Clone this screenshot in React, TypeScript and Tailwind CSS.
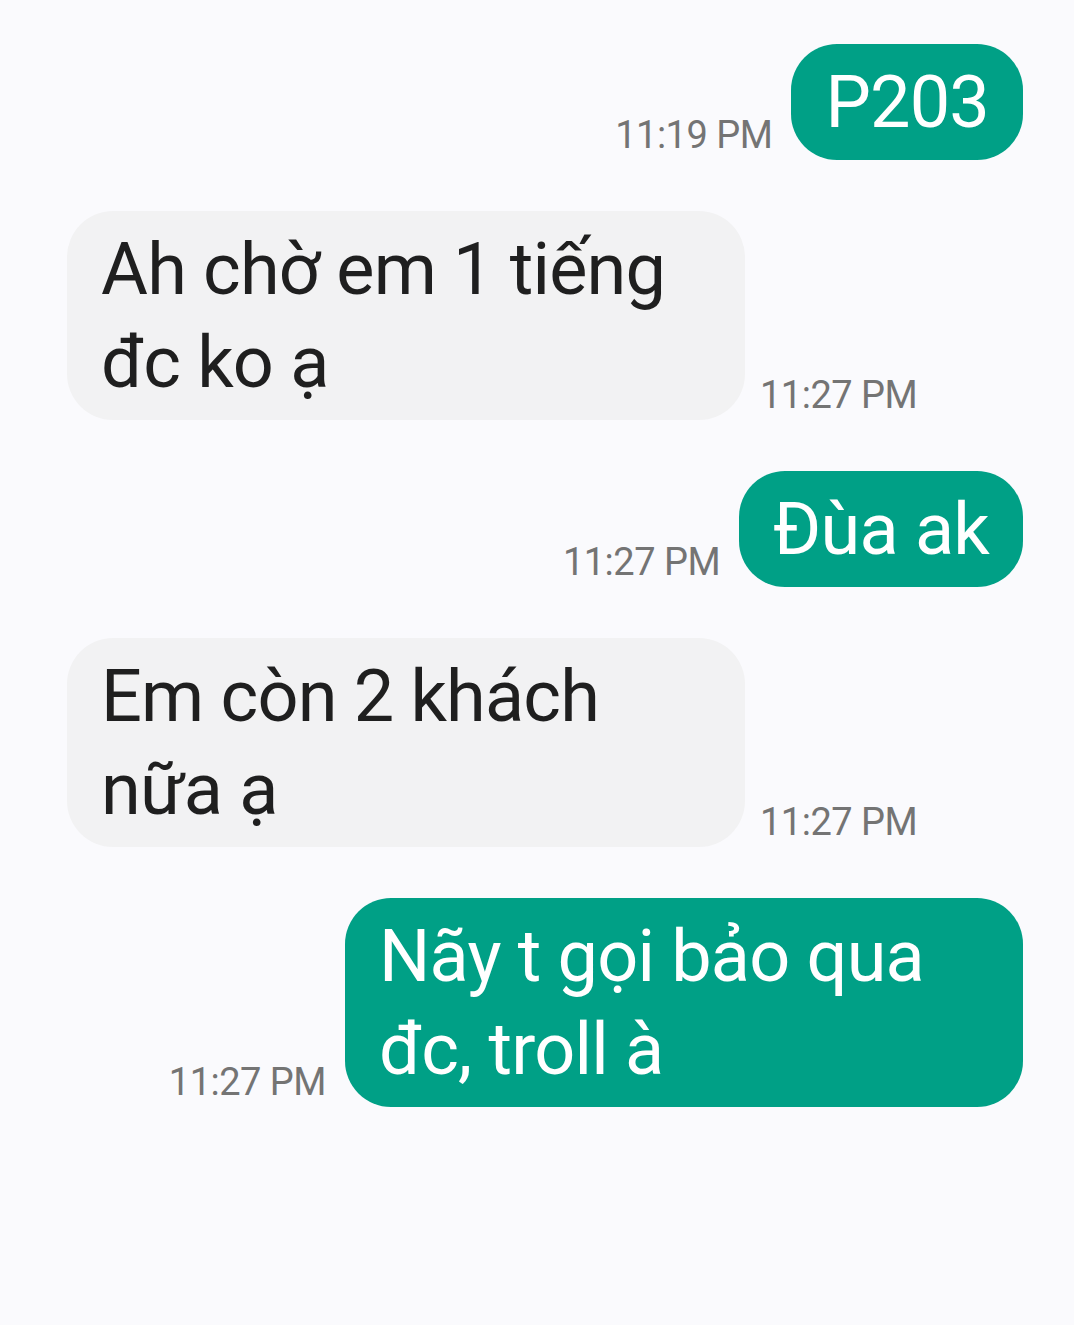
const messages: { text: string; time: string; mine: boolean }[] = [
  { text: "P203", time: "11:19 PM", mine: true },
  { text: "Ah chờ em 1 tiếng đc ko ạ", time: "11:27 PM", mine: false },
  { text: "Đùa ak", time: "11:27 PM", mine: true },
  { text: "Em còn 2 khách nữa ạ", time: "11:27 PM", mine: false },
  { text: "Nãy t gọi bảo qua đc, troll à", time: "11:27 PM", mine: true },
];

function Time({ value }: { value: string }) {
  return (
    <span className="mb-[6px] shrink-0 whitespace-nowrap text-[38px] leading-[38px] tracking-[-0.5px] text-[#747474]">
      {value}
    </span>
  );
}

export default function App() {
  return (
    <div
      className="min-h-screen bg-[#fafafd] pt-[44px] pl-[67px] pr-[51px]"
      style={{ fontFamily: "Roboto, 'Noto Sans', sans-serif" }}
    >
      <div className="flex flex-col gap-[51px]">
        {messages.map((m, i) => (
          <div
            key={i}
            className={`flex items-end ${m.mine ? "justify-end gap-[19px]" : "justify-start gap-[15px]"}`}
          >
            {m.mine && <Time value={m.time} />}
            <div
              className={`max-w-[678px] rounded-[46px] px-[34px] py-[11.5px] text-[72px] leading-[93px] tracking-[-0.8px] ${
                m.mine ? "bg-[#00a086] text-white" : "w-[678px] bg-[#f2f2f3] text-[#1f1f1f]"
              }`}
            >
              {m.text}
            </div>
            {!m.mine && <Time value={m.time} />}
          </div>
        ))}
      </div>
    </div>
  );
}
